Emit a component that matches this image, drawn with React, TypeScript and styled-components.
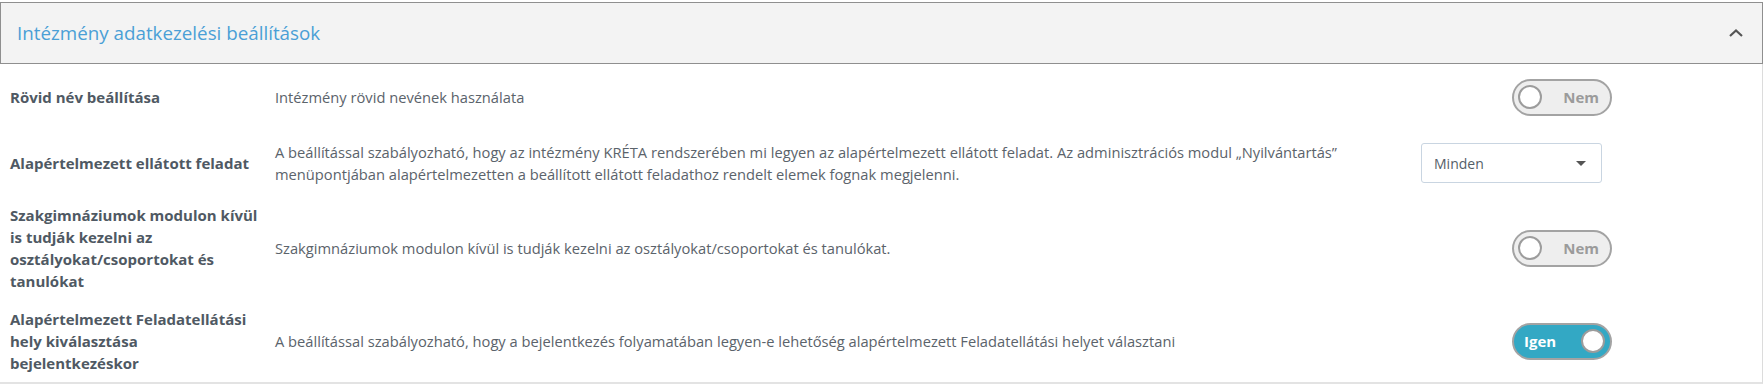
import React from "react";
import styled, { createGlobalStyle } from "styled-components";

const GlobalStyle = createGlobalStyle`
  html, body {
    margin: 0;
    padding: 0;
    background: #ffffff;
  }
  body {
    font-family: "Open Sans", "Noto Sans", sans-serif;
  }
  * { box-sizing: border-box; }
`;

const Page = styled.div`
  width: 1763px;
  padding-top: 2px;
`;

const Header = styled.div`
  height: 62px;
  border: 1px solid #8f8f8f;
  background: #f3f3f3;
  display: flex;
  align-items: center;
  justify-content: space-between;
  padding: 0 19px 0 16px;
`;

const Title = styled.h2`
  margin: 0;
  font-size: 18.8px;
  font-weight: 400;
  color: #4a9fd6;
`;

const Chevron = styled.svg`
  display: block;
  width: 14px;
  height: 8px;
`;

const Body = styled.div`
  border-right: 1px solid #dcdcdc;
  border-bottom: 2px solid #e3e3e3;
`;

const Row = styled.div`
  display: grid;
  grid-template-columns: 275px 1fr 300px;
  align-items: center;
  padding: 8px 50px 8px 0;
`;

const Label = styled.div`
  padding: 0 12px 0 10px;
  font-size: 15px;
  font-weight: 700;
  line-height: 22px;
  color: #4f5963;
`;

const Desc = styled.div`
  padding-right: 15px;
  font-size: 14.7px;
  line-height: 22px;
  color: #5b636b;
`;

const Control = styled.div<{ $align: "center" | "start" }>`
  min-height: 50px;
  display: flex;
  align-items: center;
  justify-content: ${(p) => (p.$align === "center" ? "center" : "flex-start")};
  padding-left: ${(p) => (p.$align === "center" ? "0" : "9px")};
`;

const Track = styled.div<{ $on: boolean }>`
  width: 100px;
  height: 37px;
  border: 2px solid #a3a3a3;
  border-radius: 19px;
  background: ${(p) => (p.$on ? "#33a8c4" : "#eeeeee")};
  display: flex;
  flex-direction: ${(p) => (p.$on ? "row-reverse" : "row")};
  align-items: center;
  justify-content: space-between;
  padding: ${(p) => (p.$on ? "0 5px 0 10px" : "0 11px 0 4px")};
`;

const Knob = styled.span`
  width: 24px;
  height: 24px;
  border-radius: 50%;
  border: 2px solid #9c9c9c;
  background: #ffffff;
`;

const ToggleText = styled.span<{ $on: boolean }>`
  font-size: 15px;
  font-weight: 700;
  color: ${(p) => (p.$on ? "#ffffff" : "#9b9b9b")};
`;

const Select = styled.div`
  width: 181px;
  height: 40px;
  border: 1px solid #c9d5e1;
  border-radius: 3px;
  display: flex;
  align-items: center;
  justify-content: space-between;
  padding: 0 15px 0 12px;
  font-size: 14px;
  color: #555e68;
  background: #fff;
`;

const Caret = styled.span`
  width: 0;
  height: 0;
  border-left: 5px solid transparent;
  border-right: 5px solid transparent;
  border-top: 5px solid #555;
`;

const Toggle: React.FC<{ on: boolean }> = ({ on }) => (
  <Track $on={on}>
    <Knob />
    <ToggleText $on={on}>{on ? "Igen" : "Nem"}</ToggleText>
  </Track>
);

export default function App() {
  return (
    <Page>
      <GlobalStyle />
      <Header>
        <Title>Intézmény adatkezelési beállítások</Title>
        <Chevron viewBox="0 0 14 8">
          <polyline points="1,7 7,1.5 13,7" fill="none" stroke="#555" strokeWidth="2.2" />
        </Chevron>
      </Header>
      <Body>
        <Row>
          <Label>Rövid név beállítása</Label>
          <Desc>Intézmény rövid nevének használata</Desc>
          <Control $align="center">
            <Toggle on={false} />
          </Control>
        </Row>
        <Row>
          <Label>Alapértelmezett ellátott feladat</Label>
          <Desc>
            A beállítással szabályozható, hogy az intézmény KRÉTA rendszerében mi legyen az alapértelmezett ellátott
            feladat. Az adminisztrációs modul „Nyilvántartás” menüpontjában alapértelmezetten a beállított ellátott
            feladathoz rendelt elemek fognak megjelenni.
          </Desc>
          <Control $align="start">
            <Select>
              <span>Minden</span>
              <Caret />
            </Select>
          </Control>
        </Row>
        <Row>
          <Label>Szakgimnáziumok modulon kívül is tudják kezelni az osztályokat/csoportokat és tanulókat</Label>
          <Desc>Szakgimnáziumok modulon kívül is tudják kezelni az osztályokat/csoportokat és tanulókat.</Desc>
          <Control $align="center">
            <Toggle on={false} />
          </Control>
        </Row>
        <Row>
          <Label>Alapértelmezett Feladatellátási hely kiválasztása bejelentkezéskor</Label>
          <Desc>
            A beállítással szabályozható, hogy a bejelentkezés folyamatában legyen-e lehetőség alapértelmezett
            Feladatellátási helyet választani
          </Desc>
          <Control $align="center">
            <Toggle on={true} />
          </Control>
        </Row>
      </Body>
    </Page>
  );
}
